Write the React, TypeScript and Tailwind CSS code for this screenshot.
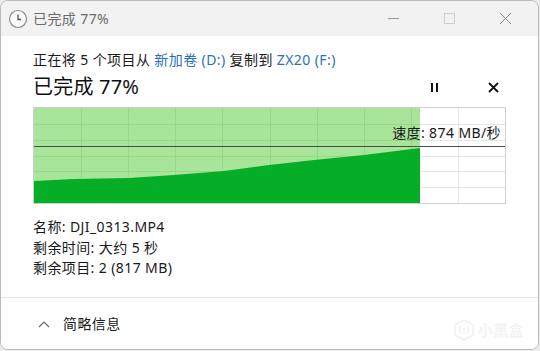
import React from "react";

const font = { fontFamily: '"Segoe UI", "Noto Sans", "Noto Sans CJK SC", sans-serif' };

function Chart() {
  const W = 471;
  const H = 95;
  const vlines = [] as number[];
  for (let i = 1; i < 10; i++) vlines.push(Math.round((W / 10) * i) + 0.5);
  const hlines = [] as number[];
  for (let i = 1; i < 6; i++) hlines.push(Math.round((H / 6) * i) + 0.5);
  const fillX = 386;
  const pts = [
    [0, 73],
    [40, 71],
    [95, 70],
    [140, 67],
    [190, 63],
    [235, 57],
    [280, 52],
    [330, 47],
    [386, 40],
  ];
  const poly = pts.map((p) => p.join(",")).join(" ") + ` ${fillX},${H} 0,${H}`;
  return (
    <div className="relative mt-[7px] h-[97px] w-[473px] border border-[#cfcfcf] bg-white">
      <svg width={W} height={H} className="block">
        {vlines.map((x) => (
          <line key={"v" + x} x1={x} y1={0} x2={x} y2={H} stroke="#e6e6e6" strokeWidth={1} />
        ))}
        {hlines.map((y) => (
          <line key={"h" + y} x1={0} y1={y} x2={W} y2={y} stroke="#e6e6e6" strokeWidth={1} />
        ))}
        <rect x={0} y={0} width={fillX} height={H} fill="#a8e59b" />
        {vlines
          .filter((x) => x < fillX)
          .map((x) => (
            <line key={"gv" + x} x1={x} y1={0} x2={x} y2={H} stroke="#96d889" strokeWidth={1} />
          ))}
        {hlines.map((y) => (
          <line key={"gh" + y} x1={0} y1={y} x2={fillX} y2={y} stroke="#96d889" strokeWidth={1} />
        ))}
        <polygon points={poly} fill="#06ad27" />
        <line x1={0} y1={38.5} x2={W} y2={38.5} stroke="#4b4b4b" strokeWidth={1.2} />
      </svg>
      <div
        className="absolute right-[4px] top-[16px] text-[14px] leading-[18px] tracking-[0.4px] text-[#1a1a1a]"
        style={font}
      >
        速度: 874 MB/秒
      </div>
    </div>
  );
}

export default function App() {
  return (
    <div className="h-[351px] w-[540px] bg-[#ececec] tracking-[0.4px]" style={font}>
      <div className="flex h-[350px] w-[539px] flex-col overflow-hidden rounded-[8px] border border-[#b9b9b9] bg-white">
        {/* title bar */}
        <div className="flex h-[35px] shrink-0 items-center bg-[#f2f2f2]">
          <svg width="20" height="20" viewBox="0 0 20 20" className="ml-[7px]">
            <circle cx="10" cy="10" r="8.5" fill="#fbfbfb" stroke="#8a8a8a" strokeWidth="1.2" />
            <path d="M10 5.5 V10.5 H13" fill="none" stroke="#555" strokeWidth="1.3" />
          </svg>
          <span className="ml-[5px] text-[14px] leading-[18px] text-[#6b6b6b]">已完成 77%</span>
          <div className="ml-auto flex items-center">
            <div className="flex w-[46px] justify-center">
              <div className="h-[1px] w-[11px] bg-[#9a9a9a]" />
            </div>
            <div className="ml-[10px] flex w-[46px] justify-center">
              <div className="h-[11px] w-[11px] border border-[#cdcdcd]" />
            </div>
            <div className="ml-[10px] mr-[10px] flex w-[46px] justify-center">
              <svg width="13" height="13" viewBox="0 0 13 13">
                <path d="M1 1 L12 12 M12 1 L1 12" stroke="#8a8a8a" strokeWidth="1" />
              </svg>
            </div>
          </div>
        </div>

        {/* body */}
        <div className="flex flex-1 flex-col px-[32px] pt-[14px]">
          <div className="text-[14px] leading-[20px] text-[#1a1a1a]">
            正在将 5 个项目从 <span className="text-[#2a6fbf]">新加卷 (D:)</span> 复制到{" "}
            <span className="text-[#2a6fbf]">ZX20 (F:)</span>
          </div>
          <div className="mt-[4px] flex h-[26px] w-[473px] items-center">
            <span className="text-[20px] leading-[26px] tracking-[0.2px] text-[#111]">已完成 77%</span>
            <div className="ml-auto flex items-center">
              <div className="flex gap-[3px]">
                <div className="h-[9px] w-[2px] bg-[#111]" />
                <div className="h-[9px] w-[2px] bg-[#111]" />
              </div>
              <svg width="11" height="11" viewBox="0 0 11 11" className="ml-[50px] mr-[7px]">
                <path d="M1 1 L10 10 M10 1 L1 10" stroke="#111" strokeWidth="1.8" />
              </svg>
            </div>
          </div>
          <Chart />
          <div className="mt-[13px] text-[14px] leading-[20.5px] text-[#1a1a1a]">
            <div>名称: DJI_0313.MP4</div>
            <div>剩余时间: 大约 5 秒</div>
            <div>剩余项目: 2 (817 MB)</div>
          </div>
        </div>

        {/* footer */}
        <div className="relative flex h-[52px] shrink-0 items-center border-t border-[#e3e3e3] bg-white">
          <svg width="12" height="8" viewBox="0 0 12 8" className="ml-[37px]">
            <path d="M1 7 L6 2 L11 7" fill="none" stroke="#6a6a6a" strokeWidth="1.2" />
          </svg>
          <span className="ml-[13px] text-[14px] leading-[20px] text-[#1a1a1a]">简略信息</span>
          <div className="absolute right-[14px] top-[21px] flex items-center gap-[4px] opacity-40">
            <svg width="20" height="22" viewBox="0 0 20 22">
              <path d="M10 1 L19 6 V16 L10 21 L1 16 V6 Z" fill="none" stroke="#dcdcdc" strokeWidth="1.5" />
              <path d="M6 7 V15 M10 9 V15 M14 7 V15" stroke="#dcdcdc" strokeWidth="1.5" />
            </svg>
            <span className="text-[15px] font-bold leading-[20px] text-[#e2e2e2]">小黑盒</span>
          </div>
        </div>
      </div>
    </div>
  );
}
